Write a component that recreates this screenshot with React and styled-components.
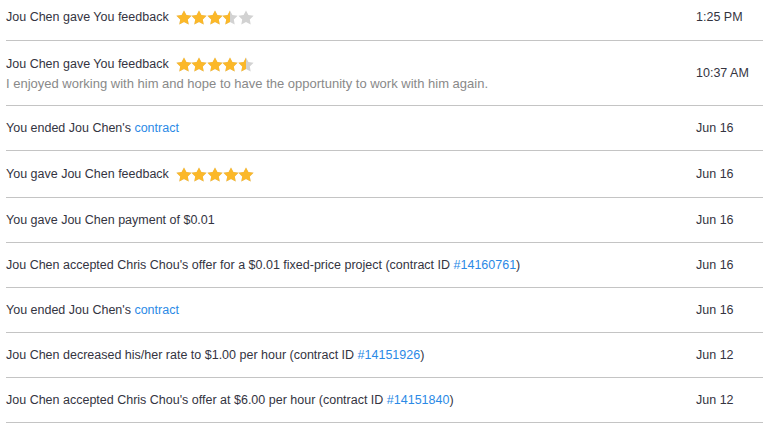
import React from "react";
import styled, { createGlobalStyle } from "styled-components";

const GlobalStyle = createGlobalStyle`
  body {
    margin: 0;
    background: #fff;
    font-family: "Liberation Sans", Arial, sans-serif;
  }
`;

const Feed = styled.div`
  width: 757px;
  margin-left: 6px;
`;

const Row = styled.div`
  display: flex;
  align-items: center;
  padding: ${(p) => (p.$first ? "9px 0 14px" : "15px 0 14px")};
  border-bottom: 1px solid #c4c4c4;
`;

const Body = styled.div`
  flex: 1;
  display: flex;
  flex-direction: column;
  gap: 3px;
`;

const Title = styled.div`
  display: flex;
  align-items: center;
  font-size: 12.5px;
  line-height: 15px;
  color: #34343f;
  white-space: pre;
`;

const Note = styled.div`
  font-size: 13px;
  line-height: 15px;
  color: #898989;
`;

const Link = styled.span`
  color: #2b8ae6;
`;

const StarRow = styled.span`
  display: inline-flex;
  align-items: center;
  height: 17px;
  margin-left: 7px;
`;

const StarSvg = styled.svg`
  display: block;
  margin-right: -0.4px;
`;

const When = styled.div`
  width: 67px;
  font-size: 12.5px;
  line-height: 15px;
  color: #34343f;
`;

const STAR = "M8 0.4l2.4 4.7 5.2 .7-3.8 3.6 .9 5.1-4.7-2.5-4.7 2.5 .9-5.1L0.4 5.8l5.2-.7z";

function Star({ fill, id }) {
  // fill: 0, 0.5 or 1
  return (
    <StarSvg viewBox="0 0 16 15" width="16" height="15">
      <defs>
        <clipPath id={id}>
          <rect x="0" y="0" width={16 * fill} height="15" />
        </clipPath>
      </defs>
      <path d={STAR} fill="#d2d2d2" />
      {fill > 0 && <path d={STAR} fill="#fbb829" clipPath={`url(#${id})`} />}
    </StarSvg>
  );
}

function Stars({ value, name }) {
  return (
    <StarRow>
      {[0, 1, 2, 3, 4].map((i) => (
        <Star key={i} id={`${name}-${i}`} fill={Math.max(0, Math.min(1, value - i))} />
      ))}
    </StarRow>
  );
}

const items = [
  { text: <>Jou Chen gave You feedback</>, stars: 3.5, date: "1:25 PM", first: true },
  {
    text: <>Jou Chen gave You feedback</>,
    stars: 4.5,
    note: "I enjoyed working with him and hope to have the opportunity to work with him again.",
    date: "10:37 AM",
  },
  { text: <>You ended Jou Chen's <Link>contract</Link></>, date: "Jun 16" },
  { text: <>You gave Jou Chen feedback</>, stars: 5, date: "Jun 16" },
  { text: <>You gave Jou Chen payment of $0.01</>, date: "Jun 16" },
  {
    text: <>Jou Chen accepted Chris Chou's offer for a $0.01 fixed-price project (contract ID <Link>#14160761</Link>)</>,
    date: "Jun 16",
  },
  { text: <>You ended Jou Chen's <Link>contract</Link></>, date: "Jun 16" },
  {
    text: <>Jou Chen decreased his/her rate to $1.00 per hour (contract ID <Link>#14151926</Link>)</>,
    date: "Jun 12",
  },
  {
    text: <>Jou Chen accepted Chris Chou's offer at $6.00 per hour (contract ID <Link>#14151840</Link>)</>,
    date: "Jun 12",
  },
];

export default function App() {
  return (
    <>
      <GlobalStyle />
      <Feed>
        {items.map((item, i) => (
          <Row key={i} $first={item.first}>
            <Body>
              <Title>
                {item.text}
                {item.stars != null && <Stars name={`s${i}`} value={item.stars} />}
              </Title>
              {item.note && <Note>{item.note}</Note>}
            </Body>
            <When>{item.date}</When>
          </Row>
        ))}
      </Feed>
    </>
  );
}
